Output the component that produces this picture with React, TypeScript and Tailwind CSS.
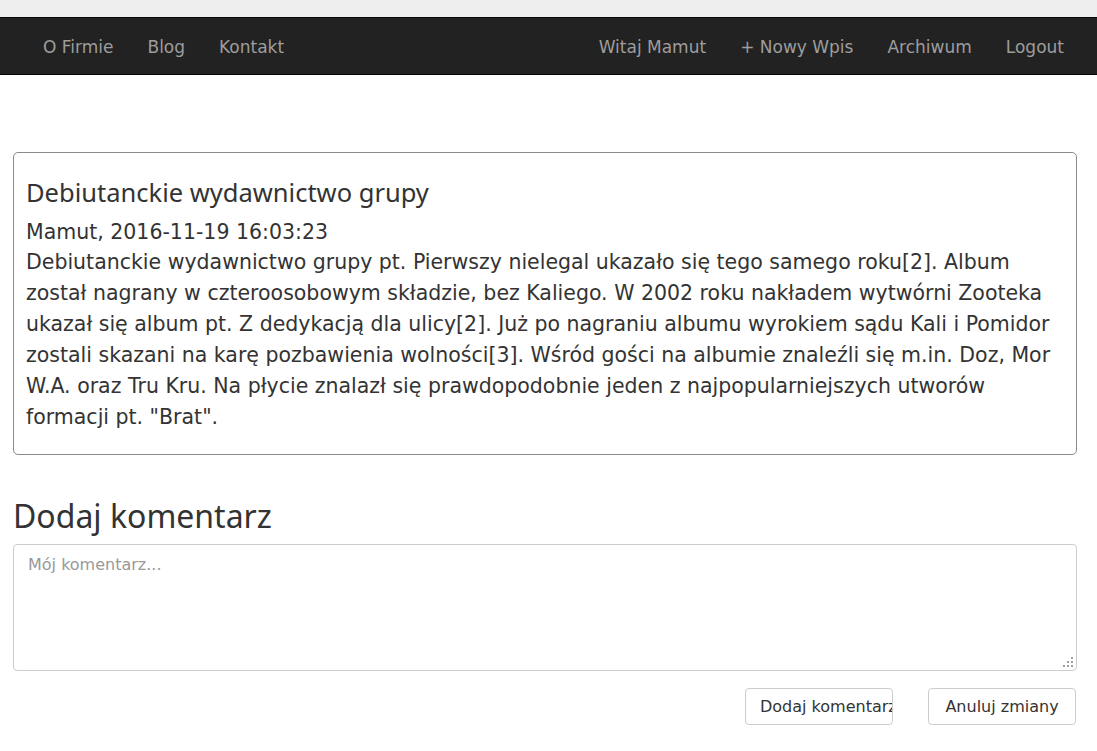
export default function App() {
  const left = ["O Firmie", "Blog", "Kontakt"];
  const right = ["Witaj Mamut", "+ Nowy Wpis", "Archiwum", "Logout"];
  const lines = [
    "Debiutanckie wydawnictwo grupy pt. Pierwszy nielegal ukazało się tego samego roku[2]. Album",
    "został nagrany w czteroosobowym składzie, bez Kaliego. W 2002 roku nakładem wytwórni Zooteka",
    "ukazał się album pt. Z dedykacją dla ulicy[2]. Już po nagraniu albumu wyrokiem sądu Kali i Pomidor",
    "zostali skazani na karę pozbawienia wolności[3]. Wśród gości na albumie znaleźli się m.in. Doz, Mor",
    "W.A. oraz Tru Kru. Na płycie znalazł się prawdopodobnie jeden z najpopularniejszych utworów",
    'formacji pt. "Brat".',
  ];

  return (
    <div className="min-h-[751px] bg-white text-[#333]">
      {/* browser-ish top strip */}
      <div className="h-[17px] bg-[#eeeeee]" />

      {/* Navbar */}
      <nav className="h-[58px] bg-[#222222] border-y border-[#080808] flex items-center justify-between pl-[26px] pr-[16px] pt-[3px] font-['DejaVu_Sans',sans-serif] text-[17px] text-[#9d9d9d]">
        <ul className="flex">
          {left.map((l) => (
            <li key={l} className="px-[17px]">{l}</li>
          ))}
        </ul>
        <ul className="flex">
          {right.map((l) => (
            <li key={l} className="px-[17px]">{l}</li>
          ))}
        </ul>
      </nav>

      <main className="pl-[13px] pr-[20px] pt-[77px]">
        {/* Post card */}
        <article className="border border-[#8a8a8a] rounded-[5px] px-[12px] pt-[21px] pb-[21px]">
          <h2 className="font-['Noto_Sans',sans-serif] text-[25.5px] leading-[36px] text-[#333]">
            Debiutanckie wydawnictwo grupy
          </h2>
          <div className="font-['DejaVu_Sans',sans-serif] text-[20.5px] text-[#333] mt-[8px]">
            <p className="leading-[29px]">Mamut, 2016-11-19 16:03:23</p>
            <p className="leading-[31px]">
              {lines.map((l, i) => (
                <span key={i} className="block whitespace-nowrap">{l}</span>
              ))}
            </p>
          </div>
        </article>

        {/* Comment form */}
        <h3 className="font-['Noto_Sans',sans-serif] text-[32px] leading-[40px] mt-[41px] mb-[8px] text-[#333]">
          Dodaj komentarz
        </h3>
        <div className="relative">
          <textarea
            placeholder="Mój komentarz..."
            className="block w-full h-[127px] resize-none border border-[#cccccc] rounded-[4px] px-[14px] py-[8px] font-['DejaVu_Sans',sans-serif] text-[16px] placeholder:text-[#999] outline-none"
          />
          {/* resize grip */}
          <svg className="absolute right-[4px] bottom-[4px]" width="10" height="10" viewBox="0 0 10 10">
            <g fill="#a0a0a0">
              <rect x="8" y="0" width="2" height="2" />
              <rect x="4" y="4" width="2" height="2" />
              <rect x="8" y="4" width="2" height="2" />
              <rect x="0" y="8" width="2" height="2" />
              <rect x="4" y="8" width="2" height="2" />
              <rect x="8" y="8" width="2" height="2" />
            </g>
          </svg>
        </div>
        <div className="flex justify-end gap-[35px] mt-[17px] pr-px">
          <button className="w-[148px] h-[37px] border border-[#cccccc] rounded-[4px] bg-white font-['DejaVu_Sans',sans-serif] text-[16px] text-[#333] whitespace-nowrap overflow-hidden text-left pl-[14px]">
            Dodaj komentarz
          </button>
          <button className="w-[148px] h-[37px] border border-[#cccccc] rounded-[4px] bg-white font-['DejaVu_Sans',sans-serif] text-[16px] text-[#333]">
            Anuluj zmiany
          </button>
        </div>
      </main>
    </div>
  );
}
